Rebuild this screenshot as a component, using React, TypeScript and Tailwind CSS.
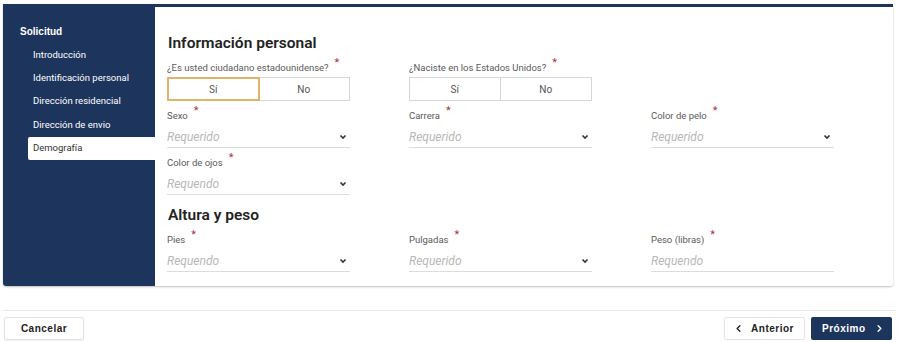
import { ChevronLeft, ChevronRight } from 'lucide-react';

const navItems = [
  'Introducción',
  'Identificación personal',
  'Dirección residencial',
  'Dirección de envio',
  'Demografía',
];

function Req() {
  return <span className="relative -top-[5px] ml-[6px] text-[11px] leading-none text-[#b0303f]">*</span>;
}

function Label({ text }: { text: string }) {
  return (
    <div className="h-[12px] text-[9.5px] leading-[12px] text-[#5a5a5a] whitespace-nowrap">
      {text}
      <Req />
    </div>
  );
}

function Chevron() {
  return (
    <svg width="8" height="6" viewBox="0 0 8 6" className="mr-[3px]">
      <path d="M1.5 1.5 L4 4 L6.5 1.5" fill="none" stroke="#333" strokeWidth="1.6" />
    </svg>
  );
}

function SelectField({ label, placeholder, arrow = true }: { label: string; placeholder: string; arrow?: boolean }) {
  return (
    <div className="w-[183px]">
      <Label text={label} />
      <div className="h-[26px] flex items-end justify-between pb-[2px] border-b border-[#dcdcdc]">
        <span className="text-[12px] leading-[16px] italic text-[#b8b8b8]">{placeholder}</span>
        {arrow && <div className="pb-[5px]"><Chevron /></div>}
      </div>
    </div>
  );
}

function YesNo({ label, selected }: { label: string; selected: boolean }) {
  return (
    <div className="w-[183px]">
      <Label text={label} />
      <div className="mt-[3px] h-[24px] flex border border-[#d6d6d6] text-[10px] text-[#555]">
        <div className={`w-1/2 flex items-center justify-center ${selected ? 'outline-2 outline-[#e0b468] -outline-offset-1' : 'border-r border-[#d6d6d6]'}`}>Sí</div>
        <div className="w-1/2 flex items-center justify-center">No</div>
      </div>
    </div>
  );
}

export default function App() {
  return (
    <div className="w-[898px] h-[342px] bg-white font-['Roboto',sans-serif] overflow-hidden">
      <div className="pt-1 pl-[3px] pr-[5px]">
        <div className="flex h-[282px] border-t-[3px] border-[#1d355d] rounded-b-[3px] shadow-[0_1px_2px_rgba(0,0,0,0.25)] overflow-hidden">
          {/* Sidebar */}
          <div className="w-[152px] shrink-0 bg-[#1d355d] pt-[15px]">
            <div className="pl-[17px] h-[19px] text-[10px] font-bold text-white leading-[19px] font-['Liberation_Sans',sans-serif]">Solicitud</div>
            <div className="mt-[2px] pl-[25px]">
              {navItems.map((item) => (
                <div
                  key={item}
                  className={`h-[23.4px] flex items-center pl-[5px] text-[9.5px] ${
                    item === 'Demografía' ? 'bg-white text-[#333] rounded-l-[2px]' : 'text-white'
                  }`}
                >
                  {item}
                </div>
              ))}
            </div>
          </div>

          {/* Content */}
          <div className="flex-1 bg-white pl-[12px] pt-[26px]">
            <h2 className="text-[15.5px] leading-[20px] font-semibold text-[#222] pl-[1px]">Información personal</h2>
            <div className="mt-[9px] grid grid-cols-[183px_183px_183px] gap-x-[59px]">
              <YesNo label="¿Es usted ciudadano estadounidense?" selected />
              <YesNo label="¿Naciste en los Estados Unidos?" selected={false} />
              <div />
            </div>
            <div className="mt-[9px] grid grid-cols-[183px_183px_183px] gap-x-[59px]">
              <SelectField label="Sexo" placeholder="Requerido" />
              <SelectField label="Carrera" placeholder="Requerido" />
              <SelectField label="Color de pelo" placeholder="Requerido" />
            </div>
            <div className="mt-[9px]">
              <SelectField label="Color de ojos" placeholder="Requendo" />
            </div>
            <h2 className="mt-[10px] text-[15.5px] leading-[20px] font-semibold text-[#222] pl-[1px]">Altura y peso</h2>
            <div className="mt-[9px] grid grid-cols-[183px_183px_183px] gap-x-[59px]">
              <SelectField label="Pies" placeholder="Requendo" />
              <SelectField label="Pulgadas" placeholder="Requerido" />
              <SelectField label="Peso (libras)" placeholder="Requendo" arrow={false} />
            </div>
          </div>
        </div>
      </div>

      <div className="mt-[24px] mx-[3px] border-t border-[#e6e6e6]" />

      <div className="mt-[6px] flex justify-between pl-[4px] pr-[6px] font-['Liberation_Sans',sans-serif]">
        <button className="w-[80px] h-[23px] border border-[#e3e3e3] rounded-[2px] bg-white text-[10px] font-bold tracking-[0.5px] text-[#222] shadow-[0_1px_1px_rgba(0,0,0,0.06)]">
          Cancelar
        </button>
        <div className="flex gap-[6px]">
          <button className="w-[81px] h-[23px] flex items-center justify-between px-[8px] border border-[#e3e3e3] rounded-[2px] bg-white text-[10px] font-bold tracking-[0.5px] text-[#222]">
            <ChevronLeft size={11} strokeWidth={3} />
            <span className="pr-[2px]">Anterior</span>
          </button>
          <button className="w-[81px] h-[23px] flex items-center justify-between pl-[11px] pr-[7px] rounded-[2px] bg-[#1d355d] text-[10px] font-bold tracking-[0.5px] text-white">
            <span>Próximo</span>
            <ChevronRight size={11} strokeWidth={3} />
          </button>
        </div>
      </div>
    </div>
  );
}
